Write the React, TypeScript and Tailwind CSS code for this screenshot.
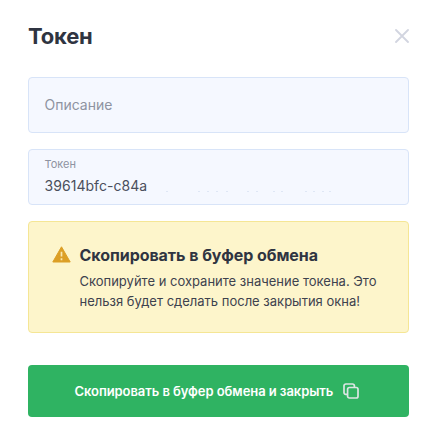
const residue = [166, 198, 207, 216, 226, 247, 256, 273, 281, 305, 313, 322, 329];

function CloseIcon() {
  return (
    <svg width="14" height="14" viewBox="0 0 14 14" fill="none" stroke="#d2d5e0" strokeWidth="1.8" strokeLinecap="round">
      <path d="M1 1L13 13M13 1L1 13" />
    </svg>
  );
}

function WarningIcon() {
  return (
    <svg width="19" height="17" viewBox="0 0 19 17" className="shrink-0">
      <path d="M9.5 0.8L18.2 16H0.8L9.5 0.8Z" fill="#dc9f26" stroke="#dc9f26" strokeWidth="1" strokeLinejoin="round" />
      <path d="M9.5 5.8V10.5M9.5 12.3V14.2" stroke="#f9e7b0" strokeWidth="1.7" />
    </svg>
  );
}

function CopyIcon() {
  return (
    <svg width="16" height="16" viewBox="0 0 16 16" fill="none" stroke="#dce5e4" strokeWidth="1.7" strokeLinejoin="round" className="-mt-px">
      <rect x="4.6" y="4.5" width="10.4" height="10.5" rx="1.8" />
      <path d="M4.5 11.4H2.8A1.8 1.8 0 0 1 1 9.6V2.8A1.8 1.8 0 0 1 2.8 1H9.6A1.8 1.8 0 0 1 11.4 2.8V4.5" />
    </svg>
  );
}

export default function App() {
  return (
    <div className="h-[442px] w-[435px] bg-white pl-7 pr-[26px] pt-5 font-['Inter',sans-serif] text-[#2f3441]">
      {/* Header */}
      <header className="flex h-8 items-center justify-between">
        <h1 className="text-[22px] font-bold leading-8 tracking-[-0.2px]">Токен</h1>
        <button aria-label="Закрыть">
          <CloseIcon />
        </button>
      </header>

      {/* Fields */}
      <div className="mt-[25px] flex flex-col gap-4">
        <div className="flex h-14 items-center rounded border border-[#d8e4f8] bg-[#f5f8ff] px-[15.5px] text-sm text-[#8e93a1]">
          Описание
        </div>

        <div className="relative h-14 rounded border border-[#d8e4f8] bg-[#f5f8ff] px-[15.5px] pt-[7px]">
          <p className="text-[11px] leading-[14px] text-[#8e93a1]">Токен</p>
          <p className="mt-[5px] text-sm leading-5 tracking-[0.05px] text-[#4a4f5c]">39614bfc-c84a</p>
          <svg className="absolute left-0 top-[41px]" width="379" height="1" fill="#dfe7f5">
            {residue.map((x) => (
              <rect key={x} x={x - 29} y="0" width="2" height="1" />
            ))}
          </svg>
        </div>

        {/* Warning */}
        <div className="flex h-28 rounded border border-[#f5e695] bg-[#fdf5cb] pl-[22.5px] pt-6">
          <WarningIcon />
          <div className="ml-[9px] whitespace-nowrap">
            <h2 className="-mt-px text-base font-bold leading-5 tracking-[-0.05px]">Скопировать в буфер обмена</h2>
            <p className="mt-[6px] text-[13px] leading-5 text-[#3d424e]">
              Скопируйте и сохраните значение токена. Это
              <br />
              нельзя будет сделать после закрытия окна!
            </p>
          </div>
        </div>
      </div>

      <button className="mt-8 flex h-[52px] w-full items-center gap-[10px] rounded bg-[#2fb362] pl-[46.5px] pt-px text-[13px] font-semibold tracking-[-0.07px] text-white">
        Скопировать в буфер обмена и закрыть
        <CopyIcon />
      </button>
    </div>
  );
}
